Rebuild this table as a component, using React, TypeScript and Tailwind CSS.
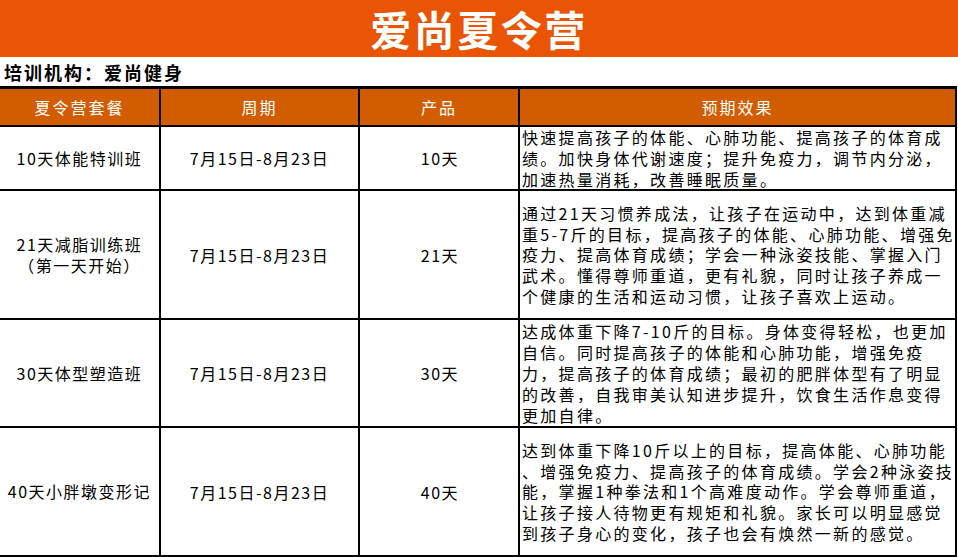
const rows = [
  {
    name: ['10天体能特训班'],
    period: '7月15日-8月23日',
    product: '10天',
    height: 'h-[62px]',
    effect: [
      '快速提高孩子的体能、心肺功能、提高孩子的体育成',
      '绩。加快身体代谢速度；提升免疫力，调节内分泌，',
      '加速热量消耗，改善睡眠质量。',
    ],
  },
  {
    name: ['21天减脂训练班', '（第一天开始）'],
    period: '7月15日-8月23日',
    product: '21天',
    height: 'h-[127px]',
    effect: [
      '通过21天习惯养成法，让孩子在运动中，达到体重减',
      '重5-7斤的目标，提高孩子的体能、心肺功能、增强免',
      '疫力、提高体育成绩；学会一种泳姿技能、掌握入门',
      '武术。懂得尊师重道，更有礼貌，同时让孩子养成一',
      '个健康的生活和运动习惯，让孩子喜欢上运动。',
    ],
  },
  {
    name: ['30天体型塑造班'],
    period: '7月15日-8月23日',
    product: '30天',
    height: 'h-[106px]',
    effect: [
      '达成体重下降7-10斤的目标。身体变得轻松，也更加',
      '自信。同时提高孩子的体能和心肺功能，增强免疫',
      '力，提高孩子的体育成绩；最初的肥胖体型有了明显',
      '的改善，自我审美认知进步提升，饮食生活作息变得',
      '更加自律。',
    ],
  },
  {
    name: ['40天小胖墩变形记'],
    period: '7月15日-8月23日',
    product: '40天',
    height: 'h-[127px]',
    effect: [
      '达到体重下降10斤以上的目标，提高体能、心肺功能',
      '、增强免疫力、提高孩子的体育成绩。学会2种泳姿技',
      '能，掌握1种拳法和1个高难度动作。学会尊师重道，',
      '让孩子接人待物更有规矩和礼貌。家长可以明显感觉',
      '到孩子身心的变化，孩子也会有焕然一新的感觉。',
    ],
  },
];

const headers = ['夏令营套餐', '周期', '产品', '预期效果'];

export default function App() {
  return (
    <div className="w-[958px] h-[557px] bg-white overflow-hidden font-['Noto_Sans_CJK_SC','Noto_Sans',sans-serif] text-black">
      <div className="h-[57px] bg-[#E95504] flex items-center justify-center">
        <h1 className="text-[41px] leading-none font-bold text-white tracking-[2.5px]">爱尚夏令营</h1>
      </div>
      <div className="h-[29px] flex items-center pl-[4px]">
        <span className="text-[18px] font-bold tracking-[2px] leading-none">培训机构：爱尚健身</span>
      </div>
      <div className="w-[957px] bg-black pt-[3px] pb-[2px] pr-[2px] grid grid-cols-[159px_197px_158px_435px] gap-[2px]">
        {headers.map((h) => (
          <div key={h} className="h-[36px] bg-[#D25C00] flex items-center justify-center text-white text-[16px] tracking-[2px]">
            {h}
          </div>
        ))}
        {rows.map((r) => (
          <>
            <div key={r.product + 'n'} className={`${r.height} bg-white flex flex-col items-center justify-center text-[16px] leading-[21px] tracking-[1.5px] whitespace-nowrap`}>
              {r.name.map((n) => (
                <div key={n}>{n}</div>
              ))}
            </div>
            <div key={r.product + 'p'} className="bg-white flex items-center justify-center text-[16px] tracking-[1.5px]">
              {r.period}
            </div>
            <div key={r.product + 'd'} className="bg-white flex items-center justify-center text-[16px] tracking-[1.5px] pl-[2px]">
              {r.product}
            </div>
            <div key={r.product + 'e'} className="bg-white flex flex-col justify-center pl-[2px] text-[16px] leading-[20.8px] tracking-[2.3px] whitespace-nowrap">
              {r.effect.map((l) => (
                <div key={l}>{l}</div>
              ))}
            </div>
          </>
        ))}
      </div>
    </div>
  );
}
